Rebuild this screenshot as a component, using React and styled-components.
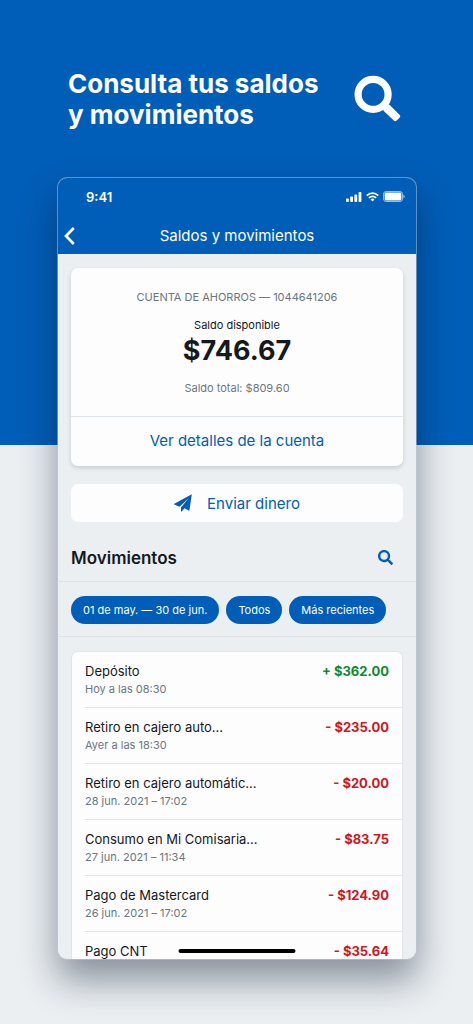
import React from "react";
import styled, { createGlobalStyle } from "styled-components";
import { FaSearch } from "react-icons/fa";

const GlobalStyle = createGlobalStyle`
  * {
    box-sizing: border-box;
  }
  body {
    margin: 0;
    font-family: Inter, "Liberation Sans", sans-serif;
    color: #15191d;
  }
  h1, h2, p, ul {
    margin: 0;
    padding: 0;
  }
  button {
    font-family: inherit;
    border: 0;
    padding: 0;
    background: none;
    cursor: pointer;
  }
`;

const Page = styled.main`
  display: flex;
  flex-direction: column;
  height: 100vh;
  padding: 68px 56px 64px 57px;
  overflow: hidden;
  background: linear-gradient(#005eb8 445px, #ebeff2 445px);
`;

const Hero = styled.header`
  display: flex;
  justify-content: space-between;
  align-items: flex-start;
  height: 109px;
  flex-shrink: 0;
  padding: 0 16px 0 11px;
  color: #fff;

  h1 {
    font-size: 26px;
    line-height: 31px;
    font-weight: 700;
  }
  svg {
    margin-top: 7px;
  }
`;

const Phone = styled.section`
  position: relative;
  flex: 1;
  min-height: 0;
  overflow: hidden;
  border: 1px solid rgba(190, 205, 220, 0.5);
  border-radius: 10px;
  background: #ebeff2;
  background-clip: padding-box;
  box-shadow: 0 20px 36px rgba(10, 25, 45, 0.44);
`;

const TopBar = styled.div`
  background: #005eb8;
  color: #fff;
`;

const StatusBar = styled.div`
  display: flex;
  justify-content: space-between;
  align-items: center;
  height: 37px;
  padding: 0 11px 0 28px;
  font-size: 13px;
  font-weight: 600;
`;

const StatusIcons = styled.div`
  display: flex;
  align-items: center;
  gap: 4px;
`;

const NavBar = styled.nav`
  display: grid;
  grid-template-columns: 22px 1fr 22px;
  align-items: center;
  height: 39px;
  padding-top: 2px;
  text-align: center;

  h2 {
    font-size: 15px;
    font-weight: 400;
  }
`;

const BackButton = styled.button`
  display: flex;
  justify-content: center;
  color: #fff;
`;

const Content = styled.div`
  padding: 14px 13px 0;
`;

const Card = styled.div`
  border-radius: 7px;
  background: #fdfdfd;
  box-shadow: 0 2px 4px rgba(40, 60, 80, 0.2);
  text-align: center;
`;

const Balance = styled.div`
  padding: 19px 12px 18px;
`;

const Caption = styled.p`
  font-size: 11px;
  line-height: 20px;
  color: #6c7680;
`;

const AvailableLabel = styled.p`
  margin-top: 10px;
  font-size: 11px;
  line-height: 17px;
`;

const Amount = styled.p`
  margin-bottom: 10px;
  font-size: 27px;
  line-height: 34px;
  font-weight: 700;
`;

const DetailsLink = styled.a`
  display: block;
  padding-bottom: 1px;
  border-top: 1px solid #dfe4e8;
  font-size: 15px;
  line-height: 48px;
  color: #005eb8;
  text-decoration: none;
`;

const SendButton = styled.button`
  display: flex;
  justify-content: center;
  align-items: center;
  gap: 15px;
  width: 100%;
  height: 38px;
  margin-top: 18px;
  border-radius: 7px;
  background: #fdfdfd;
  font-size: 15px;
  color: #005eb8;
`;

const SectionHeader = styled.div`
  display: flex;
  justify-content: space-between;
  align-items: center;
  height: 60px;
  padding: 12px 23px 0 13px;
  border-bottom: 1px solid #dfe4e8;

  h2 {
    font-size: 17px;
    font-weight: 600;
  }
`;

const SearchButton = styled.button`
  display: flex;
  color: #005eb8;
`;

const Filters = styled.div`
  display: flex;
  gap: 7px;
  padding: 14px 13px 12px;
  border-bottom: 1px solid #dfe4e8;
`;

const Pill = styled.button`
  height: 28px;
  padding: 0 12px;
  border-radius: 14px;
  background: #005eb8;
  font-size: 11px;
  white-space: nowrap;
  color: #fff;
`;

const MovementList = styled.ul`
  margin: 14px 13px 0;
  padding-left: 13px;
  border: 1px solid #dfe4e8;
  border-radius: 7px;
  background: #fdfdfd;
  list-style: none;
`;

const Movement = styled.li`
  display: flex;
  justify-content: space-between;
  padding: 9px 13px 10px 0;
  border-bottom: 1px solid #dfe4e8;
`;

const MovementName = styled.p`
  font-size: 13px;
  line-height: 20px;
`;

const MovementDate = styled.p`
  font-size: 11px;
  line-height: 16px;
  color: #6c7680;
`;

const MovementAmount = styled.span`
  font-size: 13px;
  line-height: 20px;
  font-weight: 700;
  white-space: nowrap;
  color: ${({ $income }) => ($income ? "#108a30" : "#d0161f")};
`;

const HomeIndicator = styled.div`
  position: absolute;
  bottom: 6px;
  left: 50%;
  width: 117px;
  height: 4px;
  border-radius: 2px;
  background: #000;
  transform: translateX(-50%);
`;

const filters = ["01 de may. — 30 de jun.", "Todos", "Más recientes"];

const movements = [
  { name: "Depósito", date: "Hoy a las 08:30", amount: "+ $362.00", income: true },
  { name: "Retiro en cajero auto…", date: "Ayer a las 18:30", amount: "- $235.00" },
  { name: "Retiro en cajero automátic…", date: "28 jun. 2021 – 17:02", amount: "- $20.00" },
  { name: "Consumo en Mi Comisaria…", date: "27 jun. 2021 – 11:34", amount: "- $83.75" },
  { name: "Pago de Mastercard", date: "26 jun. 2021 – 17:02", amount: "- $124.90" },
  { name: "Pago CNT", amount: "- $35.64" },
];

function BigSearch() {
  return (
    <svg width="47" height="48" viewBox="0 0 47 48" fill="none" aria-hidden="true">
      <circle cx="19.1" cy="19.4" r="15" stroke="#fff" strokeWidth="7.2" />
      <path d="M28 28l5.5 5.5" stroke="#fff" strokeWidth="4.4" />
      <path
        d="M30 33.8l3.4-3.6a1.8 1.8 0 0 1 2.6 0l9.5 9.6a2 2 0 0 1 0 2.9l-2.8 2.9a2 2 0 0 1-2.9 0l-9.8-9.3a1.8 1.8 0 0 1 0-2.5z"
        fill="#fff"
      />
    </svg>
  );
}

function Plane() {
  return (
    <svg width="18" height="18" viewBox="0 0 18 18" fill="currentColor" aria-hidden="true">
      <path d="M17.8.3L.3 9.7c-.4.2-.4.7 0 .9l5.2 2.1 8.9-8.3-7.4 9.1v3.4c0 .6.6.8 1 .4l2.4-3 4.2 2.3c.4.2.8 0 .9-.5z" />
    </svg>
  );
}

function Signal() {
  return (
    <svg width="16" height="10" viewBox="0 0 16 10" fill="#fff" aria-hidden="true">
      <rect x="0" y="6.5" width="2.8" height="3.5" rx="0.7" />
      <rect x="4.2" y="4.6" width="2.8" height="5.4" rx="0.7" />
      <rect x="8.4" y="2.4" width="2.8" height="7.6" rx="0.7" />
      <rect x="12.6" y="0" width="2.8" height="10" rx="0.7" />
    </svg>
  );
}

function Wifi() {
  return (
    <svg width="13" height="10" viewBox="0 0 14 10" fill="none" stroke="#fff" aria-hidden="true">
      <path d="M0.8 3.5a8.8 8.8 0 0 1 12.4 0" strokeWidth="1.9" />
      <path d="M3.1 6a5.5 5.5 0 0 1 7.8 0" strokeWidth="1.9" />
      <path d="M7 9.8L4.9 7.7a3 3 0 0 1 4.2 0z" fill="#fff" stroke="none" />
    </svg>
  );
}

function Battery() {
  return (
    <svg width="22" height="11" viewBox="0 0 22 11" fill="none" aria-hidden="true">
      <rect x="0.5" y="0.5" width="19" height="10" rx="2.6" stroke="#fff" strokeOpacity="0.6" />
      <rect x="1.6" y="1.6" width="16.8" height="7.8" rx="1.4" fill="#fff" />
      <path d="M20.5 3.8v3.4c.8-.3 1.2-1 1.2-1.7s-.4-1.4-1.2-1.7z" fill="#fff" fillOpacity="0.7" />
    </svg>
  );
}

export default function App() {
  return (
    <>
      <GlobalStyle />
      <Page>
        <Hero>
          <h1>
            Consulta tus saldos
            <br />y movimientos
          </h1>
          <BigSearch />
        </Hero>
        <Phone>
          <TopBar>
            <StatusBar>
              <span>9:41</span>
              <StatusIcons>
                <Signal />
                <Wifi />
                <Battery />
              </StatusIcons>
            </StatusBar>
            <NavBar>
              <BackButton aria-label="Volver">
                <svg width="11" height="18" viewBox="0 0 11 18" fill="none">
                  <path d="M9.8 1L2 9l7.8 8" stroke="currentColor" strokeWidth="2.7" />
                </svg>
              </BackButton>
              <h2>Saldos y movimientos</h2>
            </NavBar>
          </TopBar>
          <Content>
            <Card>
              <Balance>
                <Caption>CUENTA DE AHORROS — 1044641206</Caption>
                <AvailableLabel>Saldo disponible</AvailableLabel>
                <Amount>$746.67</Amount>
                <Caption>Saldo total: $809.60</Caption>
              </Balance>
              <DetailsLink href="#detalles">Ver detalles de la cuenta</DetailsLink>
            </Card>
            <SendButton>
              <Plane />
              Enviar dinero
            </SendButton>
          </Content>
          <SectionHeader>
            <h2>Movimientos</h2>
            <SearchButton aria-label="Buscar">
              <FaSearch size={15} />
            </SearchButton>
          </SectionHeader>
          <Filters>
            {filters.map((label) => (
              <Pill key={label}>{label}</Pill>
            ))}
          </Filters>
          <MovementList>
            {movements.map((item) => (
              <Movement key={item.name}>
                <div>
                  <MovementName>{item.name}</MovementName>
                  {item.date && <MovementDate>{item.date}</MovementDate>}
                </div>
                <MovementAmount $income={item.income}>{item.amount}</MovementAmount>
              </Movement>
            ))}
          </MovementList>
          <HomeIndicator />
        </Phone>
      </Page>
    </>
  );
}
